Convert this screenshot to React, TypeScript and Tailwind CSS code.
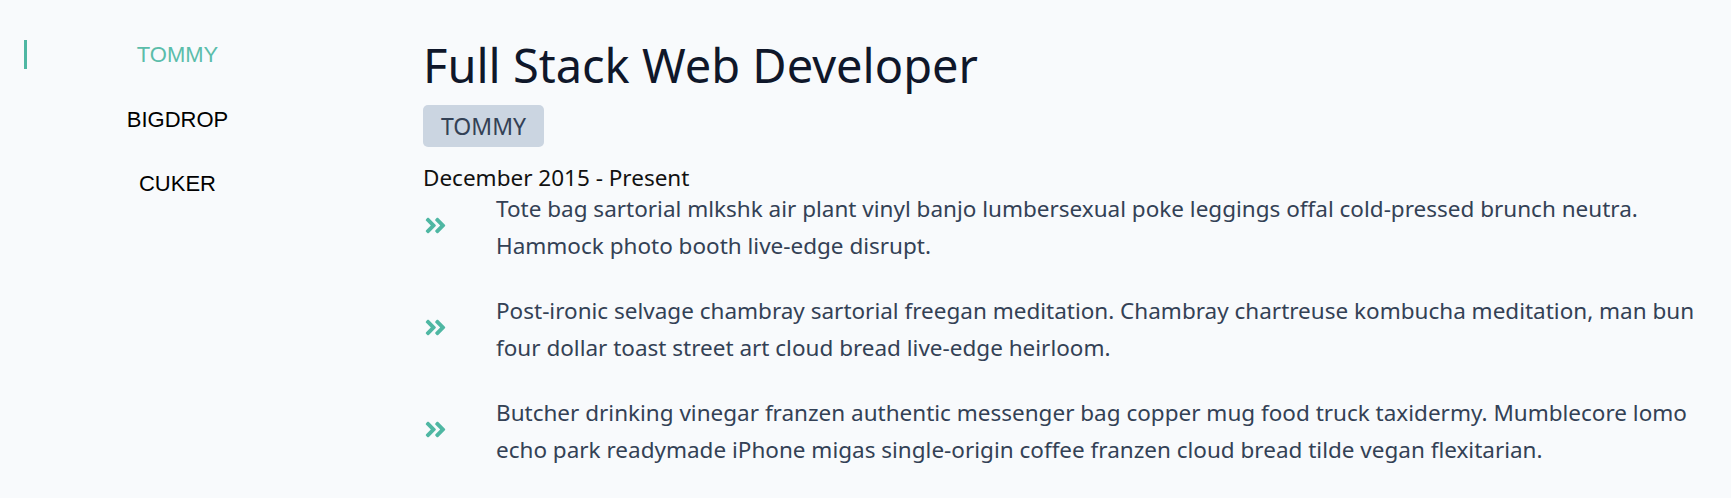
import React from "react";
import { FaAngleDoubleRight } from "react-icons/fa";

const items: string[][] = [
  [
    "Tote bag sartorial mlkshk air plant vinyl banjo lumbersexual poke leggings offal cold-pressed brunch neutra.",
    "Hammock photo booth live-edge disrupt.",
  ],
  [
    "Post-ironic selvage chambray sartorial freegan meditation. Chambray chartreuse kombucha meditation, man bun",
    "four dollar toast street art cloud bread live-edge heirloom.",
  ],
  [
    "Butcher drinking vinegar franzen authentic messenger bag copper mug food truck taxidermy. Mumblecore lomo",
    "echo park readymade iPhone migas single-origin coffee franzen cloud bread tilde vegan flexitarian.",
  ],
];

const companies = ["TOMMY", "BIGDROP", "CUKER"];

export default function App() {
  return (
    <div className="min-h-[498px] w-full bg-[#f8fafc]">
      <div className="grid grid-cols-[423px_1fr]">
        <nav className="pt-10 pl-6">
          <ul className="flex w-[304px] flex-col gap-[35.5px] font-['Liberation_Sans',Arial,sans-serif] text-[22px]">
            {companies.map((c, i) => (
              <li
                key={c}
                className={
                  i === 0
                    ? "flex h-[29px] items-center justify-center border-l-[3px] border-[#4fb7a3] text-[#5bbdaa]"
                    : "flex h-[29px] items-center justify-center border-l-[3px] border-transparent text-black"
                }
              >
                {c}
              </li>
            ))}
          </ul>
        </nav>
        <main className="pt-[41px] pr-6 font-['Noto_Sans',sans-serif]">
          <h1 className="text-[47px] leading-[48px] text-[#0f172a]">Full Stack Web Developer</h1>
          <div className="mt-[16px] inline-flex h-[42px] items-center rounded-[5px] bg-[#cbd5e1] px-[18px] text-[23px] text-[#334155]">
            TOMMY
          </div>
          <p className="mt-[17px] text-[22.5px] leading-[28px] text-[#111111]">December 2015 - Present</p>
          <ul className="-mt-[2px] flex flex-col gap-[28px]">
            {items.map((lines, i) => (
              <li key={i} className="flex items-center">
                <span className="mb-[4px] flex w-[73px] shrink-0 items-center text-[#4fb7a3]">
                  <FaAngleDoubleRight size={25} />
                </span>
                <p className="text-[22.5px] leading-[37px] text-[#334155]">
                  {lines[0]}
                  <br />
                  {lines[1]}
                </p>
              </li>
            ))}
          </ul>
        </main>
      </div>
    </div>
  );
}
